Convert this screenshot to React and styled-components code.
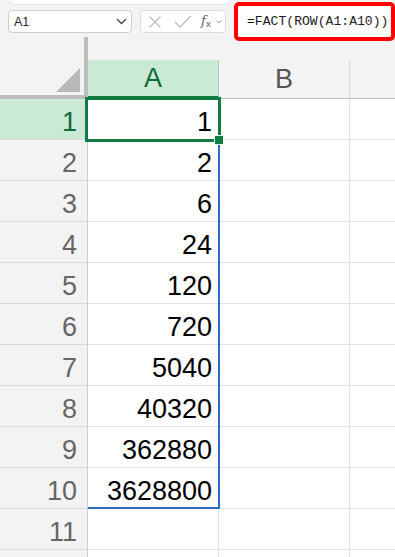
import styled, { createGlobalStyle } from "styled-components";

const GlobalStyle = createGlobalStyle`
  html, body {
    margin: 0;
    padding: 0;
    background: #f3f3f3;
  }
  body {
    font-family: "Liberation Sans", Arial, sans-serif;
  }
`;

const values = [1, 2, 6, 24, 120, 720, 5040, 40320, 362880, 3628800];
const rows = Array.from({ length: 12 }, (_, i) => i + 1);

export default function App() {
  return (
    <>
      <GlobalStyle />
      <Page>
        <Toolbar>
          <LeftGroup>
            <TopStrip />
            <BoxRow>
              <NameBox>
                <span>A1</span>
                <svg width="11" height="7" viewBox="0 0 11 7">
                  <path d="M1 1 L5.5 5.5 L10 1" fill="none" stroke="#444" strokeWidth="1.3" />
                </svg>
              </NameBox>
              <FxBox>
                <svg width="14" height="14" viewBox="0 0 14 14">
                  <path d="M1.5 1.5 L12.5 12.5 M12.5 1.5 L1.5 12.5" stroke="#bdbdbd" strokeWidth="1.3" />
                </svg>
                <svg width="18" height="13" viewBox="0 0 18 13">
                  <path d="M1 7 L6 12 L17 1" fill="none" stroke="#bdbdbd" strokeWidth="1.3" />
                </svg>
                <FxLabel>
                  <i>f</i>
                  <sub>x</sub>
                </FxLabel>
                <svg width="6" height="4" viewBox="0 0 6 4">
                  <path d="M0.5 0.5 L3 3 L5.5 0.5" fill="none" stroke="#aaa" strokeWidth="1" />
                </svg>
              </FxBox>
            </BoxRow>
          </LeftGroup>
          <FormulaBox>=FACT(ROW(A1:A10))</FormulaBox>
        </Toolbar>

        <Sheet>
          <Corner>
            <Triangle />
          </Corner>
          <ColHeader $selected>A</ColHeader>
          <ColHeader>B</ColHeader>
          <ColHeader $last />

          {rows.map((r) => (
            <Row key={r} r={r} />
          ))}

          <RangeBorder />
          <ActiveCell />
          <FillHandle />
        </Sheet>
      </Page>
    </>
  );
}

// row 12 is only a sliver at the bottom edge, its label falls below the window
function Row({ r }) {
  return (
    <>
      <RowHeader $selected={r === 1}>{r <= 11 ? r : ""}</RowHeader>
      <Cell>{values[r - 1]}</Cell>
      <Cell />
      <Cell $last />
    </>
  );
}

const Page = styled.div`
  width: 395px;
  height: 557px;
  overflow: hidden;
  background: #f3f3f3;
`;

const Toolbar = styled.div`
  display: flex;
  align-items: flex-start;
  height: 37px;
  padding-left: 8px;
`;

const LeftGroup = styled.div`
  display: flex;
  flex-direction: column;
`;

const TopStrip = styled.div`
  margin-left: 1px;
  width: 219px;
  height: 4px;
  background: #fff;
  border: 1px solid #e3e3e3;
  border-top: none;
  border-radius: 0 0 6px 6px;
`;

const BoxRow = styled.div`
  display: flex;
  gap: 8px;
  margin-top: 5px;
`;

const NameBox = styled.div`
  box-sizing: border-box;
  width: 124px;
  height: 23px;
  display: flex;
  align-items: center;
  justify-content: space-between;
  padding: 0 4px 0 5px;
  background: #fff;
  border: 1px solid #cfcfcf;
  border-radius: 4px;
  font-size: 12.5px;
  color: #262626;
`;

const FxBox = styled.div`
  box-sizing: border-box;
  width: 86px;
  height: 23px;
  display: flex;
  align-items: center;
  padding: 0 3px 0 7px;
  background: #fff;
  border: 1px solid #dcdcdc;
  border-radius: 4px;
  > svg:nth-child(2) {
    margin-left: 12px;
  }
`;

const FxLabel = styled.span`
  margin-left: 9px;
  margin-right: 5px;
  font-family: "DejaVu Serif", serif;
  color: #666;
  font-size: 13px;
  line-height: 1;
  > sub {
    font-family: "DejaVu Sans", sans-serif;
    font-size: 9px;
    vertical-align: -2px;
  }
`;

const FormulaBox = styled.div`
  box-sizing: border-box;
  width: 163px;
  height: 39px;
  margin-top: 2px;
  margin-left: 4px;
  display: flex;
  align-items: center;
  padding-left: 9px;
  background: #fff;
  border: 4px solid #ff0000;
  border-radius: 5px;
  font-family: "Liberation Mono", "DejaVu Sans Mono", monospace;
  font-size: 13.1px;
  color: #1b1b1b;
  white-space: nowrap;
`;

const Sheet = styled.div`
  position: relative;
  display: grid;
  grid-template-columns: 88px 131px 131px 1fr;
  grid-template-rows: 62px repeat(12, 41px);
  font-family: "Liberation Sans", Arial, sans-serif;
`;

const Corner = styled.div`
  box-sizing: border-box;
  position: relative;
  border-right: 4px solid #bdbdbd;
  border-bottom: 4px solid #bdbdbd;
`;

const Triangle = styled.div`
  position: absolute;
  right: 4px;
  bottom: 3px;
  width: 24px;
  height: 24px;
  background: #b9b9b9;
  clip-path: polygon(100% 0, 100% 100%, 0 100%);
`;

const ColHeader = styled.div`
  box-sizing: border-box;
  margin-top: 23px;
  height: 39px;
  display: flex;
  align-items: center;
  justify-content: center;
  padding-top: 1px;
  font-size: 27px;
  background: ${(p) => (p.$selected ? "#caead6" : "#f3f3f3")};
  color: ${(p) => (p.$selected ? "#0f6a38" : "#555")};
  border-right: ${(p) => (p.$last ? "none" : p.$selected ? "1px solid #9fd3b3" : "1px solid #dadada")};
  border-bottom: ${(p) => (p.$selected ? "3px solid #107c41" : "1px solid #bdbdbd")};
`;

const RowHeader = styled.div`
  box-sizing: border-box;
  padding: 6px 10px 0 0;
  line-height: 34px;
  text-align: right;
  font-size: 27px;
  background: ${(p) => (p.$selected ? "#caead6" : "#f3f3f3")};
  color: ${(p) => (p.$selected ? "#0f6a38" : "#666")};
  border-right: 1px solid #cdcdcd;
  border-bottom: 1px solid #d9d9d9;
`;

const Cell = styled.div`
  box-sizing: border-box;
  padding: 6px 6px 0 0;
  line-height: 34px;
  text-align: right;
  font-size: 27px;
  color: #000;
  background: #fff;
  border-right: ${(p) => (p.$last ? "none" : "1px solid #e0e0e0")};
  border-bottom: 1px solid #e0e0e0;
`;

const RangeBorder = styled.div`
  box-sizing: border-box;
  position: absolute;
  left: 88px;
  top: 62px;
  width: 132px;
  height: 410px;
  border-right: 2px solid #2f6bc7;
  border-bottom: 2px solid #2f6bc7;
  pointer-events: none;
`;

const ActiveCell = styled.div`
  box-sizing: border-box;
  position: absolute;
  left: 85px;
  top: 60px;
  width: 136px;
  height: 45px;
  border: 3px solid #107c41;
  pointer-events: none;
`;

const FillHandle = styled.div`
  position: absolute;
  left: 214px;
  top: 98px;
  width: 8px;
  height: 8px;
  background: #107c41;
  border: 1px solid #fff;
`;
